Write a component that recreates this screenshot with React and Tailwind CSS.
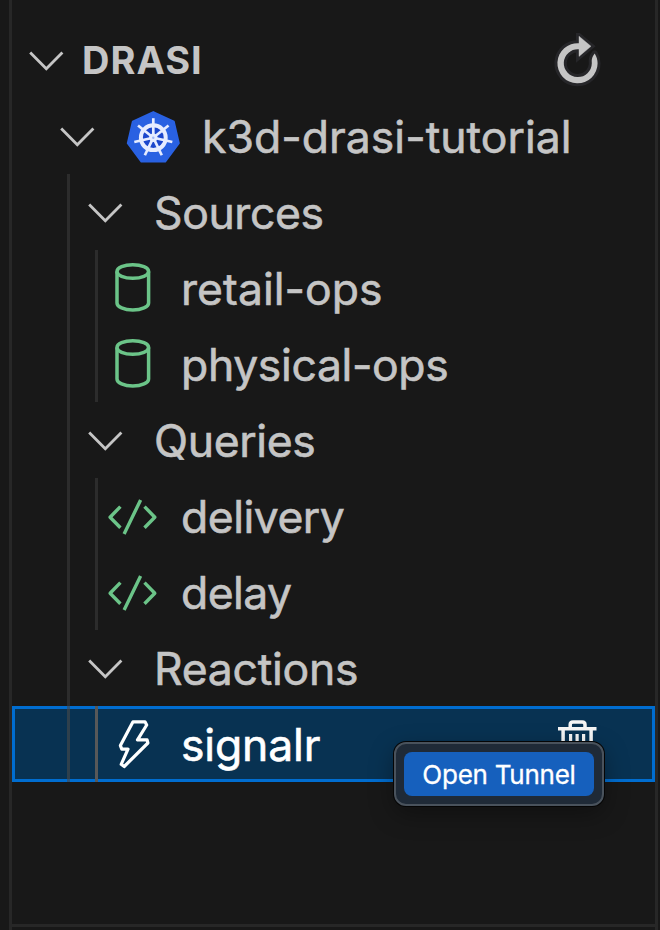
const Chevron = () => (
  <svg className="h-[76px] w-9 shrink-0" viewBox="0 0 36 76" fill="none" stroke="#c5c5c5" strokeWidth="2.8">
    <path d="M1.2 30.4 17.3 46.8 33.4 30.4" />
  </svg>
);

const Database = () => (
  <svg className="h-[76px] w-[54px] shrink-0" viewBox="0 0 54 76" fill="none" stroke="#6bc488" strokeWidth="3.5">
    <ellipse cx="26.8" cy="21.5" rx="15.8" ry="6.8" />
    <path d="M11 21.5V53c0 3.9 7 7 15.8 7s15.8-3.1 15.8-7V21.5" />
  </svg>
);

const Code = () => (
  <svg className="h-[76px] w-[54px] shrink-0" viewBox="0 0 54 76" fill="none" stroke="#6bc488" strokeWidth="3.4" strokeLinejoin="round">
    <path d="M14.4 28.6 4.1 39.2l10.3 10.6M34.6 22 18.1 56M38.5 28.6l10.3 10.6-10.3 10.6" />
  </svg>
);

const Bolt = () => (
  <svg className="h-[76px] w-[54px] shrink-0" viewBox="0 0 54 76" fill="none" stroke="#fff" strokeWidth="3.2" strokeLinejoin="round">
    <path d="M27 15.8h12l1.7 3.2L31.5 33.8h9.6l.8 3.2-23.7 23.5-3-2.2 6.8-15.1h-6.2l-1.4-3.6Z" />
  </svg>
);

const Trash = () => (
  <svg className="mr-[57px] ml-auto h-[76px] w-10 shrink-0" viewBox="0 0 40 76" fill="none" stroke="#f5f5f5" strokeWidth="3.5">
    <path d="M0 22.8h38.5M12.2 22v-3.2q0-2.8 2.8-2.8h9.2q2.8 0 2.8 2.8V22M5.1 23v30.2h28V23" />
    <path strokeWidth="3.2" d="M12.6 28v19M19.1 28v19M25.6 28v19" />
  </svg>
);

const RING = 'M26 10.2A20.1 20.1 0 1 0 44.6 30.3c0-3.8-.9-6.6-2.9-9.9-1.8 2.2-3 4.8-3 7.4 0 1 .1 1.5 .1 2.5A14 13.9 0 1 1 26 16.3Z';
const HEAD = 'M26 3.2 38 13.3 26 23.4Z';

const Refresh = () => (
  <svg className="mr-[52px] ml-auto h-[54px] w-[50px] shrink-0" viewBox="0 0 50 54">
    <path d={RING} fill="none" stroke="#262629" strokeWidth="6" strokeLinejoin="round" />
    <path d={HEAD} fill="none" stroke="#262629" strokeWidth="6" />
    <path d={RING} fill="#c5c5c5" />
    <path d={HEAD} fill="#c5c5c5" stroke="#c5c5c5" strokeWidth="0.4" />
  </svg>
);

const SPOKES = [0, 1, 2, 3, 4, 5, 6];

const Kubernetes = () => (
  <svg className="ml-[28.5px] h-[76px] w-[56px] shrink-0" viewBox="0 0 56 76">
    <path
      d="M28.3 14 48.9 23.6 53.9 45.3 40.2 63.6H16.4L2.7 45.3 7.7 23.6Z"
      fill="#2961e2"
      stroke="#2961e2"
      strokeWidth="1.8"
      strokeLinejoin="round"
    />
    <circle cx="28.3" cy="39.7" r="12.4" fill="#1b46cc" stroke="#e6ecff" strokeWidth="4" />
    {SPOKES.map((n) => (
      <path key={n} d="M28.3 37V20.2" stroke="#e6ecff" strokeWidth="2.7" transform={`rotate(${(n * 360) / 7} 28.3 39.7)`} />
    ))}
    <circle cx="28.3" cy="39.7" r="4.2" fill="#e6ecff" />
    <circle cx="28.3" cy="39.7" r="1.2" fill="#9db4f4" />
  </svg>
);

const Label = ({ className, children }) => (
  <span className={`whitespace-nowrap pt-px text-[44.5px] leading-[76px] [-webkit-text-stroke:0.6px_currentColor] ${className}`}>{children}</span>
);

const Group = ({ children, className }) => (
  <div className="flex h-[76px]">
    <div className="ml-[55px] w-[3px] bg-[#2c2c2c]" />
    <div className="w-[17.5px]" />
    <Chevron />
    <Label className={`ml-[30.5px] ${className}`}>{children}</Label>
  </div>
);

const Leaf = ({ icon, children, className }) => (
  <div className="flex h-[76px]">
    <div className="ml-[55px] w-[3px] bg-[#2c2c2c]" />
    <div className="mr-2 ml-[25px] w-[3px] bg-[#2c2c2c]" />
    {icon}
    <Label className={`ml-[21px] ${className}`}>{children}</Label>
  </div>
);

export default function App() {
  return (
    <div className="flex h-[930px] w-[660px] flex-col overflow-hidden bg-[#181818] font-['Inter','Liberation_Sans',sans-serif] text-[#c5c5c5]">
      <div className="mr-[2px] ml-[9px] flex h-[924px] flex-col border-x-[3px] border-[#272727]">
        <div className="flex h-[98px] items-center pt-[22px] pl-[17px]">
          <Chevron />
          <span className="ml-[17px] text-[38px] font-bold leading-[54px] tracking-[1px]">DRASI</span>
          <Refresh />
        </div>
        <div className="flex h-[76px]">
          <div className="w-[48px]" />
          <Chevron />
          <Kubernetes />
          <Label className="ml-[21.5px] tracking-[0.03px]">k3d-drasi-tutorial</Label>
        </div>
        <Group className="tracking-[-0.4px]">Sources</Group>
        <Leaf icon={<Database />} className="tracking-[0.05px]">retail-ops</Leaf>
        <Leaf icon={<Database />} className="tracking-[-0.36px]">physical-ops</Leaf>
        <Group className="tracking-[-0.35px]">Queries</Group>
        <Leaf icon={<Code />} className="tracking-[-0.5px]">delivery</Leaf>
        <Leaf icon={<Code />} className="tracking-[-0.55px]">delay</Leaf>
        <Group className="tracking-[-0.25px]">Reactions</Group>
        <div className="relative flex h-[76px] bg-[#083252] text-white shadow-[inset_0_0_0_3px_#006dd0]">
          <div className="ml-[55px] w-[3px] bg-[#4a4a4a]/60" />
          <div className="mr-2 ml-[25px] w-[3px] bg-[#585858]" />
          <Bolt />
          <Label className="ml-[21px] tracking-[-0.15px]">signalr</Label>
          <Trash />
          <div className="absolute top-[36px] left-[382px] flex h-[64px] w-[210px] items-center justify-center rounded-[12px] border-2 border-[#49525c] bg-[#1f2a37] shadow-[0_0_0_1px_#050505,0_8px_24px_rgba(0,0,0,0.35)]">
            <div className="flex h-11 w-[190px] items-center justify-center rounded-lg bg-[#1660bd] text-[26px] tracking-[-0.25px] [-webkit-text-stroke:0.3px_currentColor]">
              <span className="whitespace-nowrap pt-px">Open Tunnel</span>
            </div>
          </div>
        </div>
      </div>
      <div className="mr-[2px] ml-[9px] h-[3px] shrink-0 bg-[#272727]" />
      <div className="mr-[2px] ml-[9px] h-[3px] shrink-0 border-x-[3px] border-[#272727]" />
    </div>
  );
}
